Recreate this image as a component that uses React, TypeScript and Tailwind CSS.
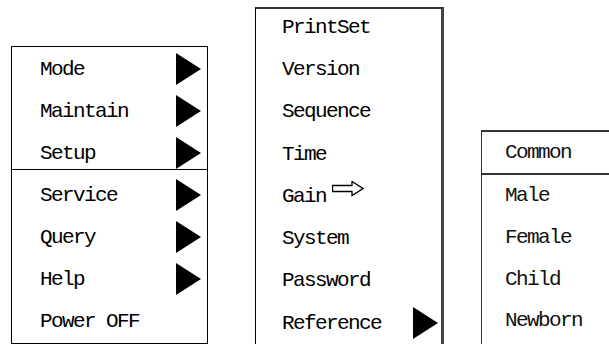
import type { ReactNode } from "react";

const Tri = () => (
  <svg width="25" height="32" viewBox="0 0 25 32" className="shrink-0">
    <polygon points="0,0 25,16 0,32" fill="#000" />
  </svg>
);

const HollowArrow = () => (
  <svg width="32" height="16" viewBox="0 0 32 16" className="mb-[14px] ml-[6px] shrink-0">
    <path d="M0.5 4.5 H20 V0.5 L31 7.5 L20 14.5 V10.5 H0.5 Z" fill="#fff" stroke="#000" strokeWidth="1.3" />
  </svg>
);

const Row = ({ label, h = "h-[42px]", children }: { label: string; h?: string; children?: ReactNode }) => (
  <div className={`flex ${h} items-center`}>
    <span className="leading-none whitespace-pre">{label}</span>
    {children}
  </div>
);

const mainTop = ["Mode", "Maintain", "Setup"];
const mainBottom = ["Service", "Query", "Help"];
const subItems = ["PrintSet", "Version", "Sequence", "Time", "Gain", "System", "Password", "Reference"];
const refItems = ["Male", "Female", "Child", "Newborn"];

export default function App() {
  return (
    <div
      className="flex h-[344px] w-[609px] items-start overflow-hidden bg-white text-[21px] tracking-[-1.6px] text-black"
      style={{ fontFamily: '"Liberation Mono", monospace' }}
    >
      {/* main menu */}
      <div className="ml-[11px] mt-[46px] flex h-[298px] w-[197px] shrink-0 flex-col border border-black">
        <div className="h-[123px] border-b border-black pl-[28px] pr-[6px] pt-[1px]">
          {mainTop.map((m) => (
            <div key={m} className="flex h-[42px] items-center justify-between">
              <span className="leading-none">{m}</span>
              <Tri />
            </div>
          ))}
        </div>
        <div className="pl-[28px] pr-[6px] pt-[4px]">
          {mainBottom.map((m) => (
            <div key={m} className="flex h-[42px] items-center justify-between">
              <span className="leading-none">{m}</span>
              <Tri />
            </div>
          ))}
          <Row label="Power OFF" />
        </div>
      </div>

      {/* setup submenu */}
      <div className="ml-[47px] mt-[7px] h-[337px] w-[189px] shrink-0 border-l border-t-2 border-r-[3px] border-l-black border-t-[#333] border-r-[#444]">
        <div className="-mt-[3px] pl-[26px]">
          {subItems.map((s) =>
            s === "Gain" ? (
              <Row key={s} label={s} h="h-[42.3px]">
                <HollowArrow />
              </Row>
            ) : s === "Reference" ? (
              <div key={s} className="flex h-[42.3px] items-center justify-between pr-[3px]">
                <span className="leading-none">{s}</span>
                <Tri />
              </div>
            ) : (
              <Row key={s} label={s} h="h-[42.3px]" />
            )
          )}
        </div>
      </div>

      {/* reference submenu */}
      <div className="ml-[37px] mt-[130px] h-[214px] w-[140px] shrink-0 border-l border-t-2 border-[#333] text-[#111]">
        <div className="flex h-[43px] items-center border-b-2 border-[#333] pl-[23px]">
          <span className="leading-none">Common</span>
        </div>
        <div className="pl-[23px]">
          {refItems.map((r) => (
            <Row key={r} label={r} h="h-[41.7px]" />
          ))}
        </div>
      </div>
    </div>
  );
}
